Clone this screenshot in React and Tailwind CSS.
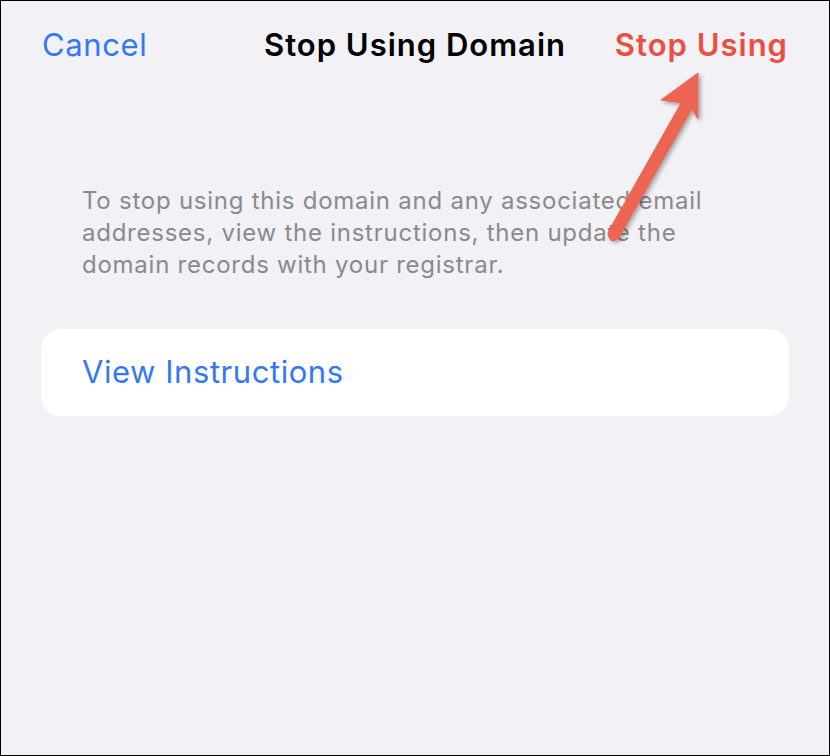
export default function App() {
  return (
    <div
      className="relative w-[830px] h-[756px] bg-[#f2f1f6] border border-black overflow-hidden"
      style={{ fontFamily: "Inter, 'Liberation Sans', sans-serif" }}
    >
      {/* Nav bar */}
      <div className="relative flex items-center justify-between h-[88px] px-[41px]">
        <button className="text-[31px] text-[#3478f6] tracking-[0.6px]">Cancel</button>
        <div className="absolute left-0 right-0 text-center pointer-events-none">
          <span className="text-[31px] font-semibold text-black tracking-[1px]">Stop Using Domain</span>
        </div>
        <button className="text-[31px] font-semibold text-[#e9503f] tracking-[1px]">Stop Using</button>
      </div>

      {/* Description */}
      <p className="mt-[96px] pl-[81px] w-[740px] text-[24px] leading-[32px] text-[#8a898e] tracking-[0.75px]">
        To stop using this domain and any associated email addresses, view the instructions, then update the
        domain records with your registrar.
      </p>

      {/* Card */}
      <div className="mx-[40px] mt-[48px] h-[87px] bg-white rounded-[20px] flex items-center px-[41px]">
        <span className="text-[31px] text-[#3478f6] tracking-[0.55px]">View Instructions</span>
      </div>

      {/* Annotation arrow */}
      <svg className="absolute left-0 top-0 pointer-events-none" width="830" height="756">
        <defs>
          <filter id="sh" x="-20%" y="-20%" width="140%" height="140%">
            <feDropShadow dx="2" dy="2" stdDeviation="2" floodColor="#000" floodOpacity="0.35" />
          </filter>
        </defs>
        <g filter="url(#sh)" fill="#ec6552" stroke="#ec6552">
          <line x1="613" y1="233" x2="686" y2="104" strokeWidth="13" strokeLinecap="round" />
          <polygon points="697,72 660,99 688,103 697,118" strokeWidth="1" strokeLinejoin="round" />
        </g>
      </svg>
    </div>
  );
}
